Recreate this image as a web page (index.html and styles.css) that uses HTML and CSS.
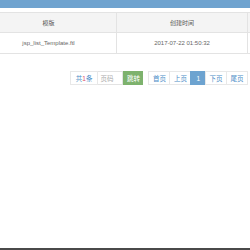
FILE: index.html
```html
<!DOCTYPE html>
<html lang="zh-CN">
<head>
    <meta charset="UTF-8">
    <meta name="viewport" content="width=device-width, initial-scale=1.0">
    <title>模版列表</title>
    <link rel="stylesheet" href="styles.css">
</head>
<body>
    <div class="page">
        <div class="topbar"></div>

        <table class="grid">
            <thead>
                <tr>
                    <th class="col-name">模版</th>
                    <th class="col-time">创建时间</th>
                    <th class="col-op"></th>
                </tr>
            </thead>
            <tbody>
                <tr>
                    <td>jsp_list_Template.ftl</td>
                    <td>2017-07-22 01:50:32</td>
                    <td><span class="btn-op"></span></td>
                </tr>
            </tbody>
        </table>

        <div class="pager">
            <span class="pager-item total">共<em>1</em>条</span>
            <input class="pager-input" type="text" placeholder="页码">
            <button class="pager-go" type="button">跳转</button>
            <a class="pager-item" href="#">首页</a>
            <a class="pager-item" href="#">上页</a>
            <a class="pager-item active" href="#">1</a>
            <a class="pager-item" href="#">下页</a>
            <a class="pager-item" href="#">尾页</a>
        </div>
    </div>
    <div class="bottombar"></div>
</body>
</html>
```

FILE: styles.css
```css
html, body {
    margin: 0;
    height: 250px;
    overflow: hidden;
}
body {
    font-family: 'Liberation Sans', 'Noto Sans CJK SC', sans-serif;
    background-color: #fff;
    color: #666;
    display: flex;
    flex-direction: column;
}
.page {
    flex: 1;
    overflow: hidden;
}
.topbar {
    height: 8px;
    background-color: #6fa3cf;
    margin-bottom: 4px;
}
.grid {
    border-collapse: collapse;
    margin-left: -20px;
    width: 290px;
    table-layout: fixed;
    font-size: 6px;
}
.grid th, .grid td {
    border: 1px solid #e3e3e3;
    text-align: center;
    padding: 0;
}
.grid th {
    height: 19px;
    background-color: #f4f4f4;
    font-weight: normal;
    color: #555;
}
.grid td {
    height: 19px;
}
.col-name { width: 135px; }
.col-time { width: 130px; }
.col-op { width: 25px; }
.btn-op {
    display: block;
    margin: 0 0 0 2px;
    height: 18px;
    border: 1px solid #8cc07c;
    border-right: none;
    background-color: #f7fbf5;
}
.pager {
    display: flex;
    justify-content: flex-end;
    align-items: stretch;
    margin: 17px 2px 0 0;
    height: 14px;
    font-size: 6.5px;
}
.pager-item {
    display: flex;
    align-items: center;
    padding: 0 3.5px;
    border: 1px solid #e8e8e8;
    margin-left: -1px;
    color: #4b8cc7;
    text-decoration: none;
}
.total {
    padding: 0 5px;
}
.total em {
    font-style: normal;
    color: #e0506a;
}
.pager-input {
    width: 20px;
    padding: 0 2px;
    margin: 0;
    border: 1px solid #e3e3e3;
    border-left: none;
    font-family: inherit;
    font-size: 6.5px;
    color: #999;
}
.pager-input::placeholder {
    color: #aaa;
}
.pager-go {
    width: 20px;
    padding: 0;
    border: none;
    background-color: #7db26d;
    color: #fff;
    font-family: inherit;
    font-size: 6.5px;
    margin-right: 6px;
}
.pager-item.active {
    background-color: #6da3d0;
    border-color: #6da3d0;
    color: #fff;
    padding: 0 5px;
}
.bottombar {
    height: 2px;
    background-color: #4a4a4a;
}
```
